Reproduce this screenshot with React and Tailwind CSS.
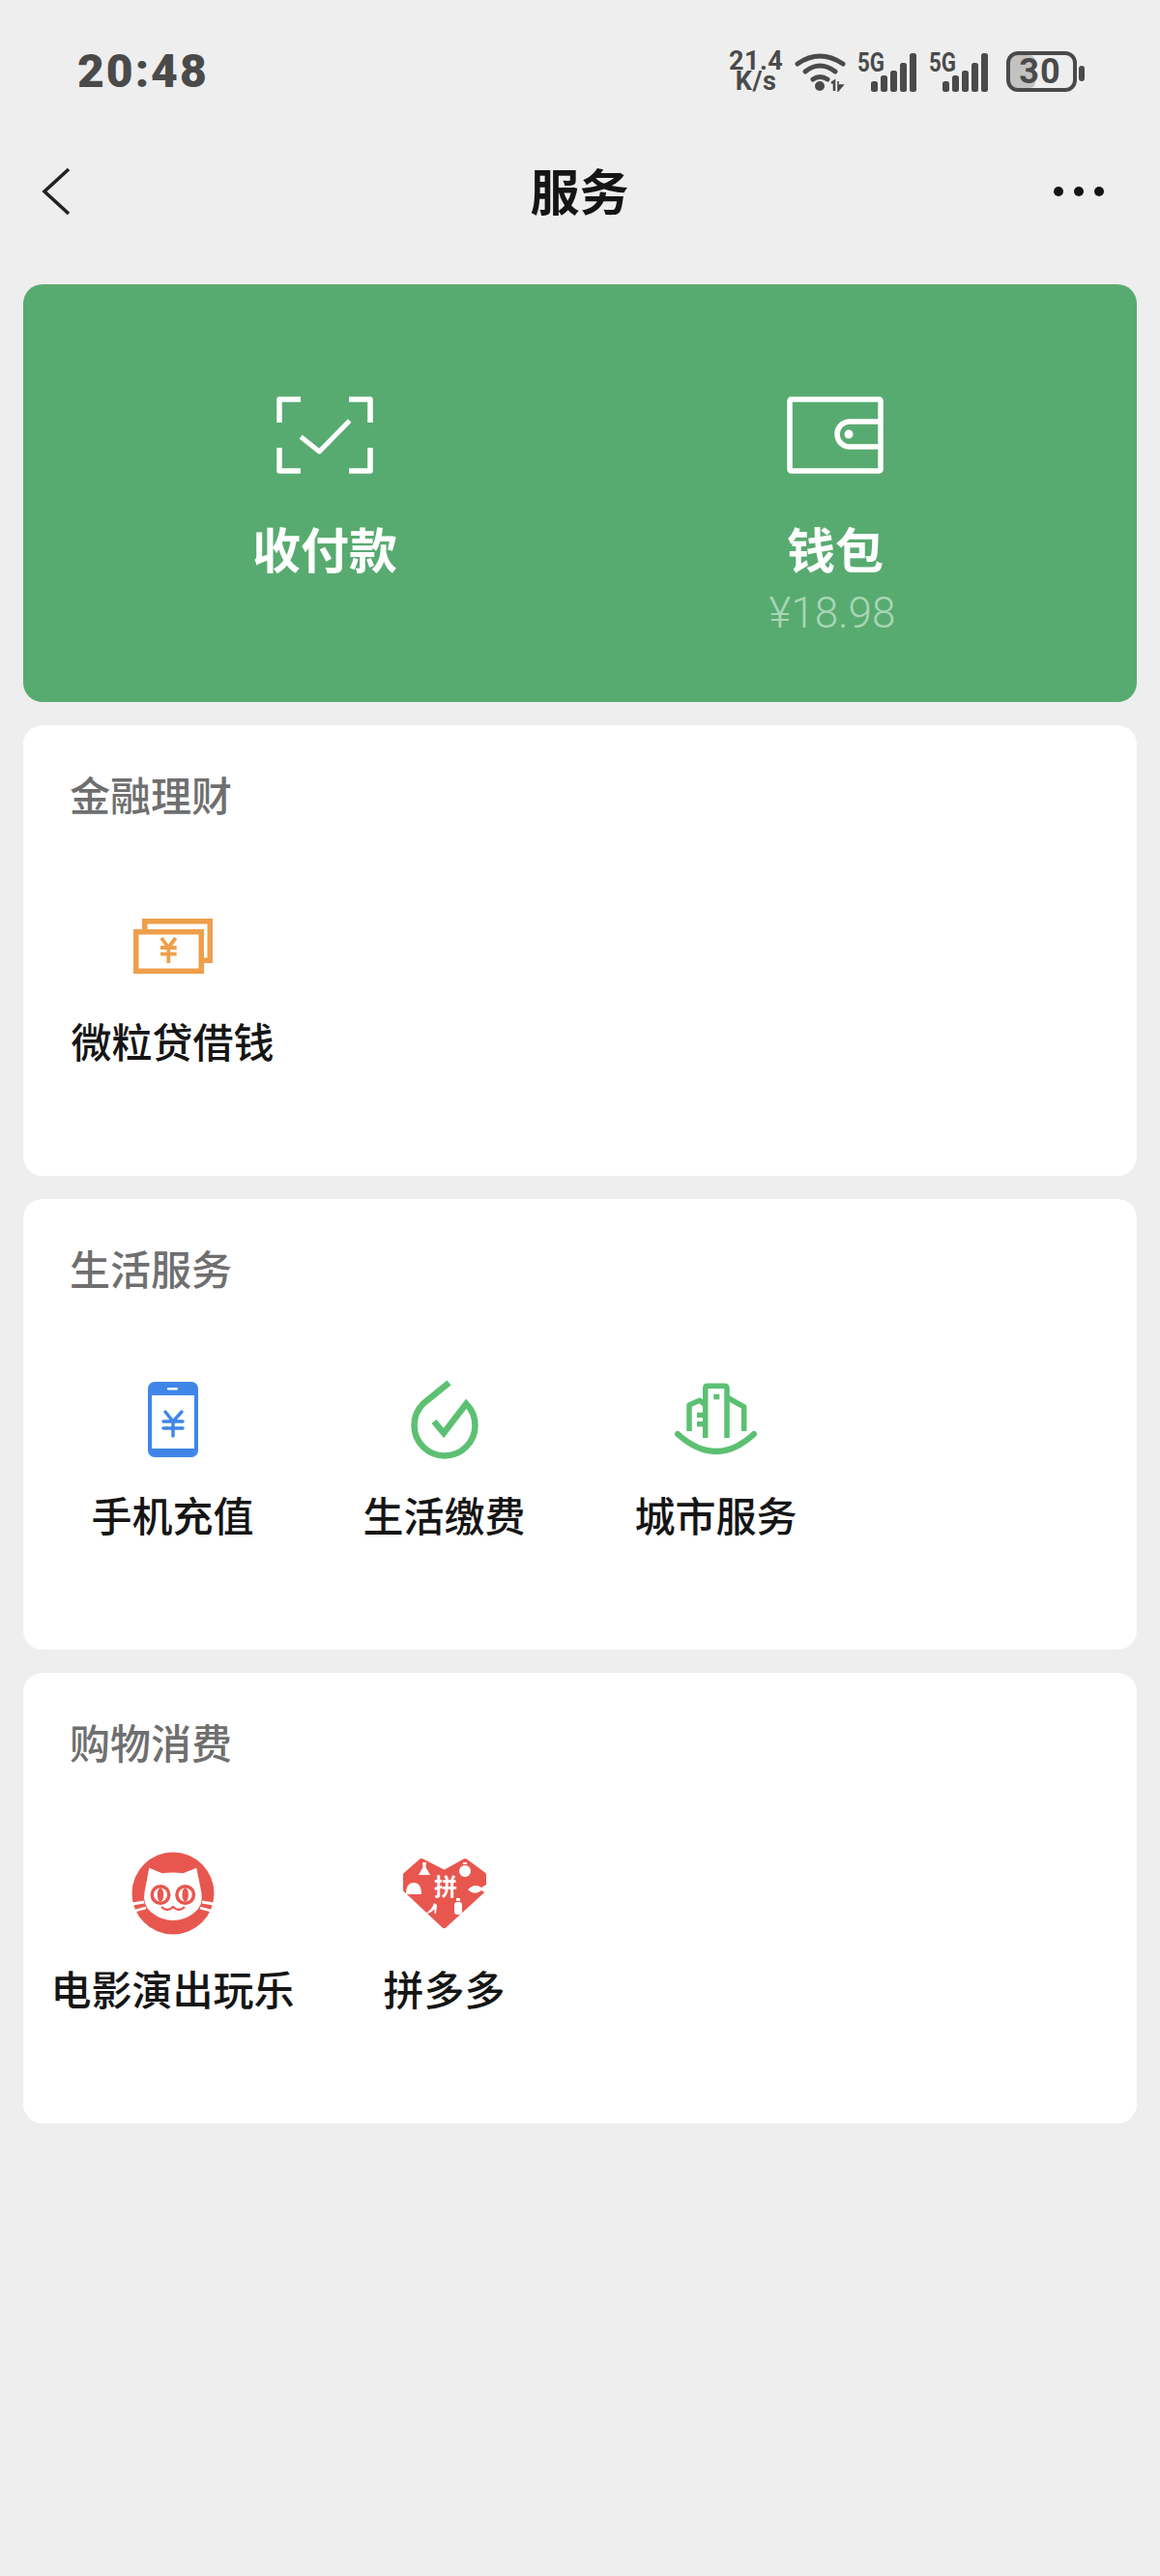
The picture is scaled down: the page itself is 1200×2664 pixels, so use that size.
import React from "react";

const gray = "#4a4a4a";

const SpeedText = () => (
  <div className="w-[56px] font-['Roboto',sans-serif] font-bold text-[27px] leading-[21px] text-center text-[#4a4a4a] tracking-[0.5px]">
    <div>21.4</div>
    <div>K/s</div>
  </div>
);

const Wifi = () => (
  <svg width="54" height="42" viewBox="0 0 54 42" fill="none">
    <path d="M3 13 Q26 -3 50 13" stroke={gray} strokeWidth="5" strokeLinecap="round" />
    <path d="M11 21 Q26 9 42 21" stroke={gray} strokeWidth="5" strokeLinecap="round" />
    <path d="M19 29 Q26 24 34 29" stroke={gray} strokeWidth="5" strokeLinecap="round" />
    <circle cx="26" cy="36" r="5" fill={gray} />
    <path d="M38 33 L41 31 V41" stroke={gray} strokeWidth="2.6" fill="none" />
    <path d="M45 31 V41 L50 35 H45" fill={gray} stroke={gray} strokeWidth="1.6" />
  </svg>
);

const Signal = () => (
  <svg width="62" height="42" viewBox="0 0 62 42" fill="none" className="overflow-visible">
    <text x="0" y="21" fontFamily="Roboto, sans-serif" fontWeight="700" fontSize="27" fill={gray} textLength="28" lengthAdjust="spacingAndGlyphs">5G</text>
    <rect x="14" y="31" width="7" height="11" rx="2.5" fill={gray} />
    <rect x="24" y="25" width="7" height="17" rx="2.5" fill={gray} />
    <rect x="34" y="20" width="7" height="22" rx="2.5" fill={gray} />
    <rect x="44" y="12" width="7" height="30" rx="2.5" fill={gray} />
    <rect x="54" y="2" width="7" height="40" rx="2.5" fill={gray} />
  </svg>
);

const Battery = () => (
  <svg width="82" height="42" viewBox="0 0 82 42" fill="none" className="overflow-visible">
    <rect x="4" y="4" width="26" height="34" rx="6" fill="#c2c2c2" />
    <rect x="2" y="2" width="69" height="38" rx="10" stroke={gray} strokeWidth="4" />
    <text x="35" y="33" textAnchor="middle" fontFamily="Roboto, sans-serif" fontWeight="700" fontSize="36" fill={gray} letterSpacing="1">30</text>
    <rect x="75" y="15" width="6" height="16" rx="3" fill={gray} />
  </svg>
);

const ScanIcon = () => (
  <svg width="100" height="80" viewBox="0 0 100 80" fill="none" stroke="#fff" strokeWidth="5.5" strokeLinejoin="round">
    <path d="M25 3 H3 V27" />
    <path d="M75 3 H97 V27" />
    <path d="M25 77 H3 V53" />
    <path d="M75 77 H97 V53" />
    <path d="M25.2 41.7 L44.4 57 L75.7 25" strokeWidth="5" />
  </svg>
);

const WalletIcon = () => (
  <svg width="100" height="80" viewBox="0 0 100 80" fill="none" stroke="#fff" strokeWidth="5.5" strokeLinejoin="round">
    <rect x="3" y="3" width="94" height="74" rx="1.5" />
    <path d="M97 26 H65 A13 13 0 0 0 65 52 H97" />
    <circle cx="64" cy="39" r="4.5" fill="#fff" stroke="none" />
  </svg>
);

const MoneyIcon = () => (
  <svg width="100" height="88" viewBox="0 0 100 88" fill="none" stroke="#ee9f4a" strokeWidth="5.5">
    <path d="M20.75 28 V18.75 H88.25 V59.25 H80" />
    <rect x="11.75" y="29.75" width="67.5" height="40.5" />
    <path d="M38 36 L45.3 46 L52.7 36 M37 46 H53.7 M37 52.7 H53.7 M45.3 46 V62" strokeWidth="3.8" />
  </svg>
);

const PhoneIcon = () => (
  <svg width="100" height="88" viewBox="0 0 100 88" fill="none">
    <rect x="24" y="5" width="52" height="78" rx="7" fill="#3f86e8" />
    <rect x="28" y="19" width="44" height="55" fill="#fff" />
    <rect x="44" y="11" width="11" height="2.5" rx="1" fill="#fff" />
    <path d="M42 36 L50 46 L59 36 M40 46 H60 M40 53 H60 M50 46 V61" stroke="#3f86e8" strokeWidth="3.4" strokeLinecap="round" />
  </svg>
);

const DropIcon = () => (
  <svg width="100" height="88" viewBox="0 0 100 88" fill="none" stroke="#5cc072" strokeWidth="6.5" strokeLinejoin="miter">
    <path d="M54.5 6 L27.7 27.7 A31.5 31.5 0 1 0 72.3 27.7 L49 58 L39 46" />
  </svg>
);

const CityIcon = () => (
  <svg width="100" height="88" viewBox="0 0 100 88" fill="none" stroke="#5cc072" strokeWidth="5.5" strokeLinejoin="round">
    <path d="M10 59 Q50 95 89 59" strokeWidth="6" strokeLinecap="round" />
    <path d="M38.7 63 V12 Q38.7 9.3 41 9.3 H58 Q61 9.3 61 12 V63" />
    <path d="M22 56 V29 L32.7 24.3 L38.7 28.7" />
    <path d="M61 21 L78.7 31 V56" />
    <rect x="47.3" y="17.7" width="6" height="5.6" fill="#5cc072" stroke="none" />
    <rect x="30" y="36.7" width="6" height="5.4" fill="#5cc072" stroke="none" />
    <rect x="30" y="46" width="6" height="5.4" fill="#5cc072" stroke="none" />
  </svg>
);

const CatIcon = () => (
  <svg width="100" height="88" viewBox="0 0 100 88" fill="none">
    <circle cx="50" cy="44" r="42.5" fill="#e8574f" />
    <path d="M25.3 17.7 L38.7 23.3 Q50 21.5 60.3 23.3 L74.3 17.7 L79.3 42.7 Q82 56 72 64 Q62 72 50 72 Q38 72 28 64 Q18 56 20.5 42.7 Z" fill="#fff" />
    <circle cx="37" cy="45.5" r="10.5" fill="#e8574f" />
    <circle cx="62.7" cy="45.5" r="10.5" fill="#e8574f" />
    <circle cx="37" cy="45.5" r="7" fill="#fff" />
    <circle cx="62.7" cy="45.5" r="7" fill="#fff" />
    <ellipse cx="37" cy="45.5" rx="3.2" ry="7" fill="#e8574f" />
    <ellipse cx="62.7" cy="45.5" rx="3.2" ry="7" fill="#e8574f" />
    <path d="M38 58 Q44 64 50 58 Q56 64 62 58" stroke="#e8574f" strokeWidth="2.2" />
    <path d="M8 55 L20 53 M11 62 L22 59 M92 55 L80 53 M89 62 L78 59" stroke="#fff" strokeWidth="2.8" />
  </svg>
);

const HeartIcon = () => (
  <svg width="100" height="88" viewBox="0 0 100 88" fill="none">
    <path d="M10 25 L26 11 L49.5 23 L71 11 L90 25 V40 L49.5 77 L10 40 Z" fill="#e8574f" stroke="#e8574f" strokeWidth="6" strokeLinejoin="round" />
    <text x="51" y="46" textAnchor="middle" fontFamily="'Noto Sans CJK SC', sans-serif" fontWeight="700" fontSize="24" fill="#fff">拼</text>
    <path d="M27 12 H31 L30.5 17 L35 25 H23 L27.5 17 Z" fill="#fff" />
    <circle cx="71" cy="21" r="6" fill="#fff" />
    <path d="M69 13 H73" stroke="#fff" strokeWidth="2" />
    <path d="M10 45 Q10 33 18 33 Q26 33 26 45 Z" fill="#fff" />
    <path d="M74 40 Q81 33 88 38 L93 35 V44 L88 41 Q81 47 74 40 Z" fill="#fff" />
    <path d="M30 65 Q37 61 39 54 L42 56 L41 65 H39.5 L39.5 60 Q36 65 30 65 Z" fill="#fff" />
    <rect x="60" y="53" width="8" height="13" rx="3" fill="#fff" />
    <rect x="62" y="49" width="4" height="3" fill="#fff" />
  </svg>
);

const sections = [
  { title: "金融理财", items: [{ label: "微粒贷借钱", icon: <MoneyIcon /> }] },
  {
    title: "生活服务",
    items: [
      { label: "手机充值", icon: <PhoneIcon /> },
      { label: "生活缴费", icon: <DropIcon /> },
      { label: "城市服务", icon: <CityIcon /> },
    ],
  },
  {
    title: "购物消费",
    items: [
      { label: "电影演出玩乐", icon: <CatIcon /> },
      { label: "拼多多", icon: <HeartIcon /> },
    ],
  },
];

export default function App() {
  return (
    <div className="w-[1200px] h-[2664px] bg-[#eeeeee] font-['Noto_Sans_CJK_SC','Noto_Sans',sans-serif] overflow-hidden">
      {/* Status bar */}
      <div className="h-[148px] flex items-center justify-between pl-[80px] pr-[77px]">
        <span className="font-['Roboto',sans-serif] font-black text-[48px] leading-none tracking-[2px] text-[#4a4a4a]">20:48</span>
        <div className="flex items-center">
          <SpeedText />
          <div className="ml-[12px]"><Wifi /></div>
          <div className="ml-[11px]"><Signal /></div>
          <div className="ml-[12px]"><Signal /></div>
          <div className="ml-[18px]"><Battery /></div>
        </div>
      </div>

      {/* Nav */}
      <div className="h-[100px] grid grid-cols-3 items-center pl-[43px] pr-[58px]">
        <svg width="32" height="52" viewBox="0 0 32 52" fill="none">
          <path d="M28 3 L3 26 L28 49" stroke="#222" strokeWidth="3.6" />
        </svg>
        <h1 className="justify-self-center ml-[14px] mb-[4px] text-[51px] font-bold text-[#151515] leading-none">服务</h1>
        <div className="justify-self-end flex gap-[11px]">
          <span className="w-[10px] h-[10px] rounded-full bg-[#151515]" />
          <span className="w-[10px] h-[10px] rounded-full bg-[#151515]" />
          <span className="w-[10px] h-[10px] rounded-full bg-[#151515]" />
        </div>
      </div>

      <div className="mt-[46px] mx-[24px] flex flex-col gap-[24px]">
        {/* Green hero */}
        <div className="h-[432px] rounded-[20px] bg-[#58ab70] grid grid-cols-2 px-[48px] pt-[116px] text-white">
          <div className="flex flex-col items-center">
            <ScanIcon />
            <div className="mt-[46px] text-[50px] leading-[60px] font-bold">收付款</div>
          </div>
          <div className="flex flex-col items-center">
            <WalletIcon />
            <div className="mt-[46px] text-[50px] leading-[60px] font-bold">钱包</div>
            <div className="mt-[13px] mr-[6px] font-['Roboto',sans-serif] font-light text-[44px] leading-[50px] text-[#a9d6b6]">¥18.98</div>
          </div>
        </div>

        {sections.map((section) => (
          <div key={section.title} className="h-[466px] rounded-[20px] bg-white px-[14px] pt-[43px]">
            <div className="pl-[34px] text-[42px] leading-[56px] font-medium text-[#6f6f6f]">{section.title}</div>
            <div className="mt-[85px] grid grid-cols-4">
              {section.items.map((item) => (
                <div key={item.label} className="flex flex-col items-center">
                  <div className="h-[88px]">{item.icon}</div>
                  <div className="mt-[26px] text-[42px] leading-[56px] font-medium text-[#151515] whitespace-nowrap">{item.label}</div>
                </div>
              ))}
            </div>
          </div>
        ))}
      </div>
    </div>
  );
}
